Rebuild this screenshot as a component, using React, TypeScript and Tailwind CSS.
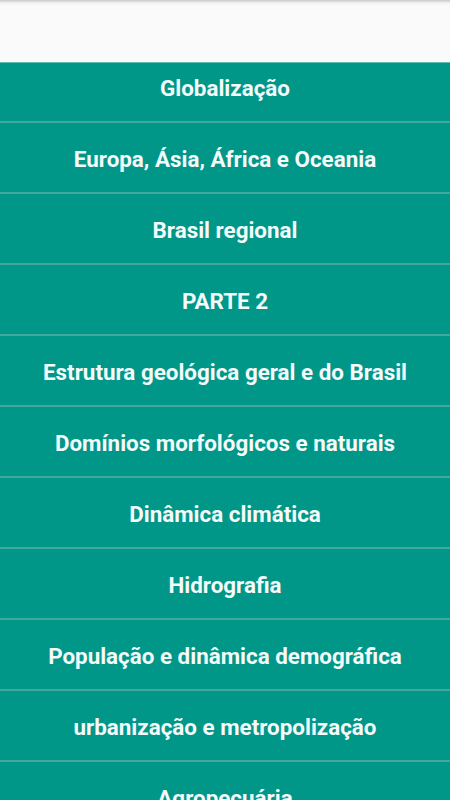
const topics = [
  "Globalização",
  "Europa, Ásia, África e Oceania",
  "Brasil regional",
  "PARTE 2",
  "Estrutura geológica geral e do Brasil",
  "Domínios morfológicos e naturais",
  "Dinâmica climática",
  "Hidrografia",
  "População e dinâmica demográfica",
  "urbanização e metropolização",
  "Agropecuária",
  "Indústria",
];

export default function App() {
  return (
    <div className="h-[800px] w-[450px] flex flex-col bg-[#009688] overflow-hidden font-['Roboto',sans-serif]">
      {/* Toolbar */}
      <header className="h-[62px] shrink-0 bg-gradient-to-b from-[#c8c8c8] via-[#f3f3f3] to-[#fafafa] bg-[length:100%_6px] bg-no-repeat bg-[#fafafa]" />

      {/* List */}
      <div className="flex-1 overflow-hidden border-t border-[#5fbcb2]">
        <ul className="-mt-[11px]">
          {topics.map((t) => (
            <li
              key={t}
              className="h-[71px] flex items-center justify-center pt-[5px] border-b-2 border-[#40aa9e] text-[22.4px] font-bold text-[#f4fbfa]"
            >
              {t}
            </li>
          ))}
        </ul>
      </div>
    </div>
  );
}
